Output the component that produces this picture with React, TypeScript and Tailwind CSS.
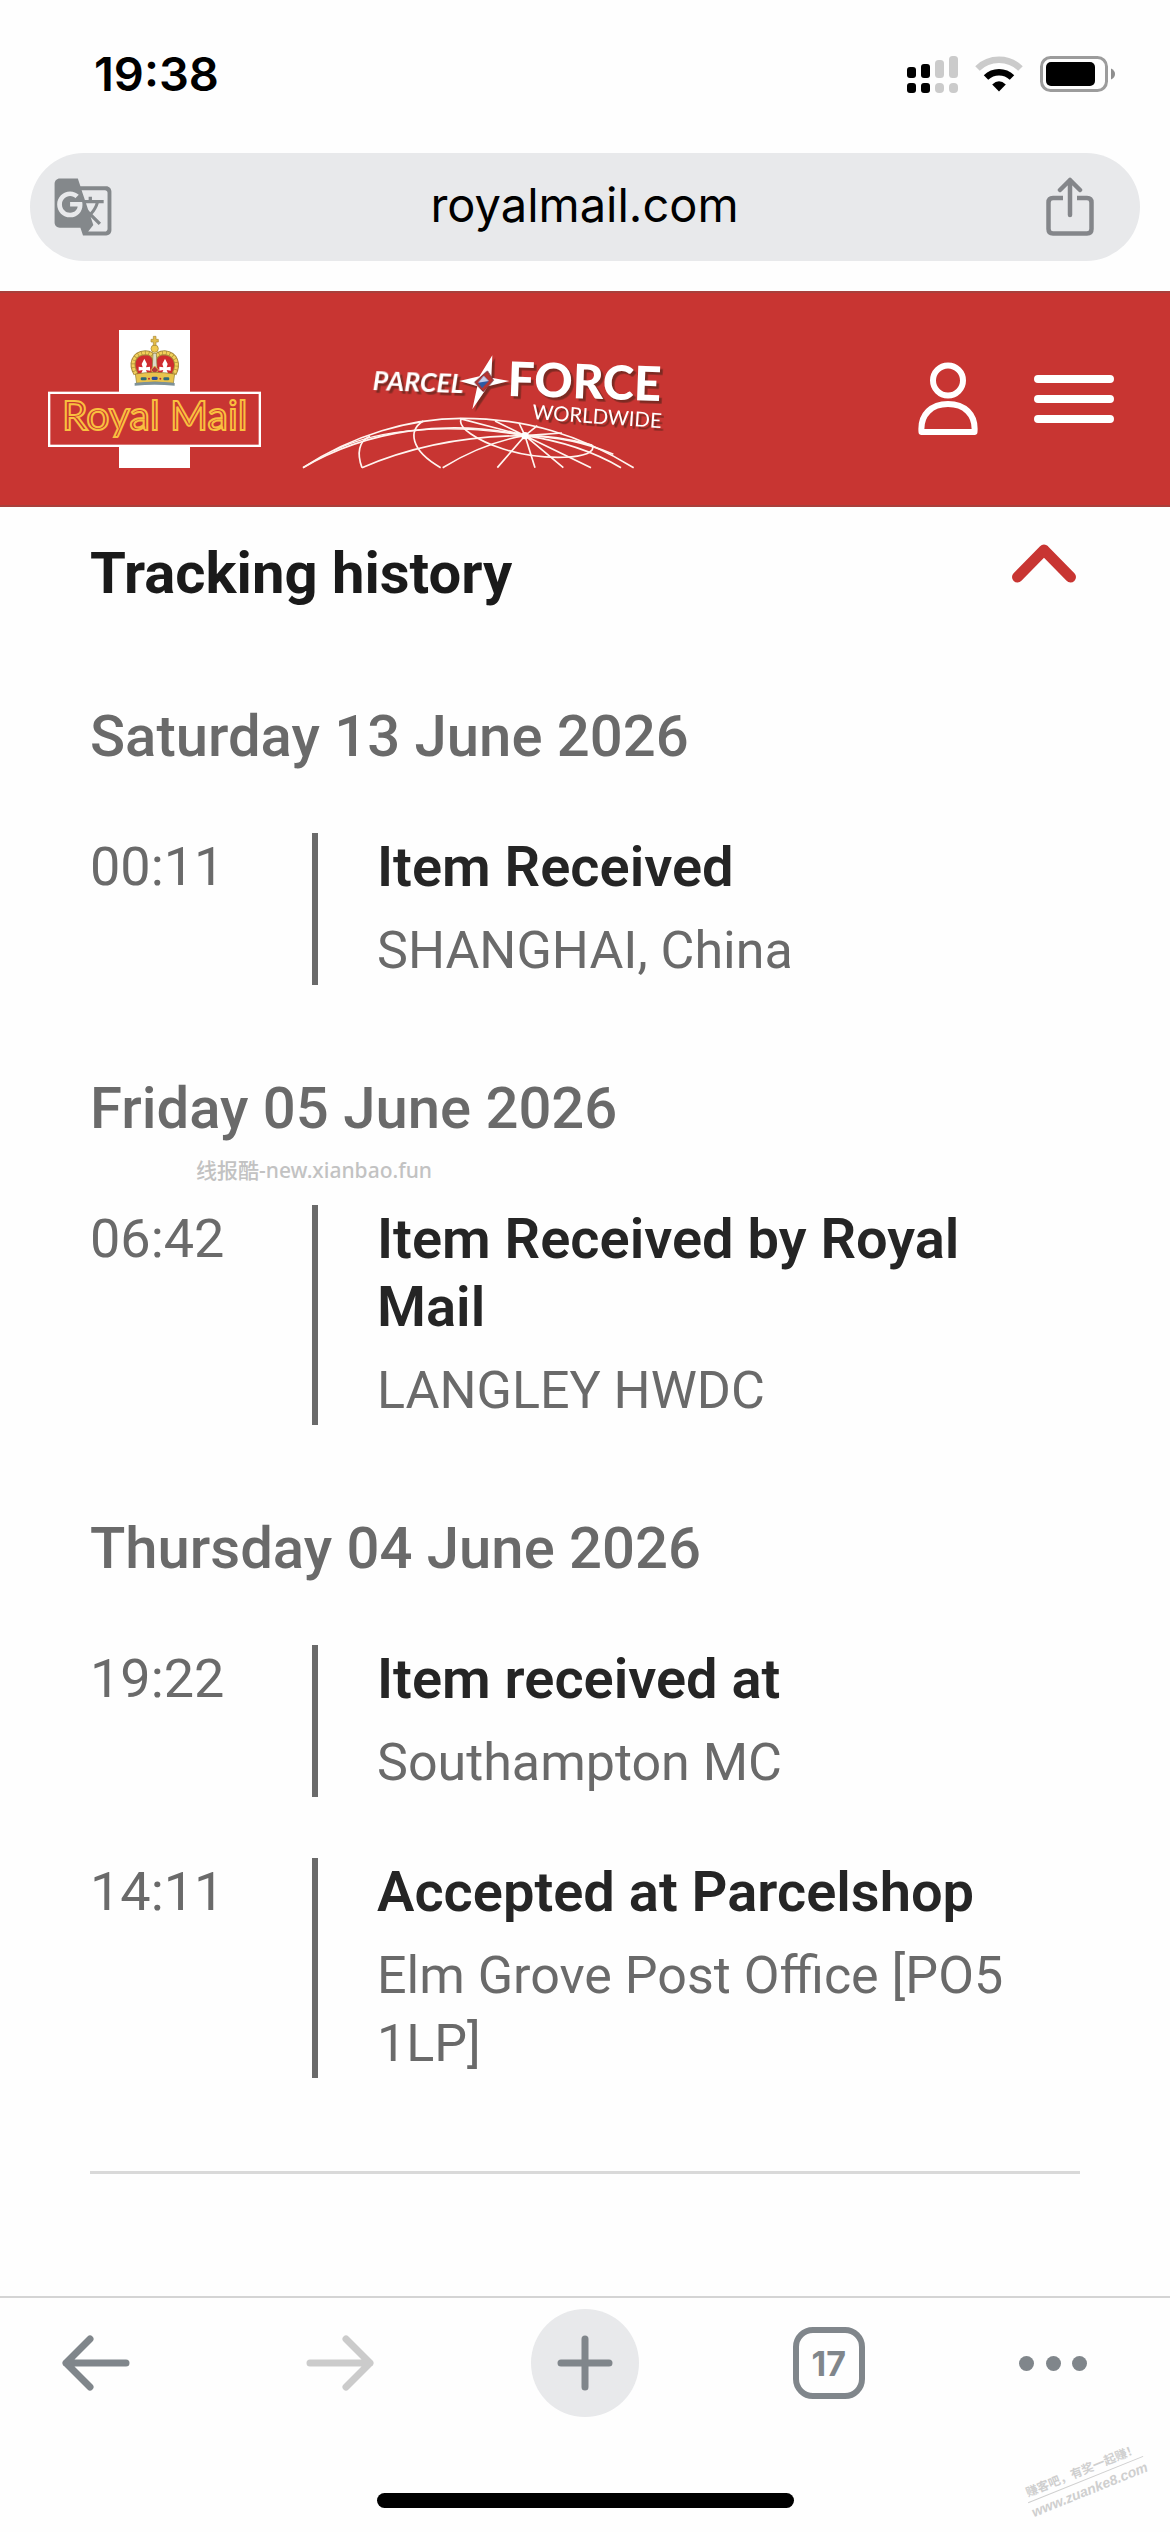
import { MdGTranslate } from "react-icons/md";

type TrackingEvent = {
  time: string;
  title: string;
  location: string;
};

type TrackingDay = {
  date: string;
  events: TrackingEvent[];
};

const days: TrackingDay[] = [
  {
    date: "Saturday 13 June 2026",
    events: [{ time: "00:11", title: "Item Received", location: "SHANGHAI, China" }],
  },
  {
    date: "Friday 05 June 2026",
    events: [
      { time: "06:42", title: "Item Received by Royal Mail", location: "LANGLEY HWDC" },
    ],
  },
  {
    date: "Thursday 04 June 2026",
    events: [
      { time: "19:22", title: "Item received at", location: "Southampton MC" },
      {
        time: "14:11",
        title: "Accepted at Parcelshop",
        location: "Elm Grove Post Office [PO5 1LP]",
      },
    ],
  },
];

function SignalIcon() {
  return (
    <svg width="51" height="37" viewBox="0 0 51 37" aria-hidden="true">
      <g fill="#000">
        <rect x="0" y="11" width="9" height="11" rx="3" />
        <rect x="14" y="8" width="9" height="14" rx="3" />
        <rect x="0" y="27" width="9" height="10" rx="3" />
        <rect x="14" y="27" width="9" height="10" rx="3" />
      </g>
      <g fill="#cbcbcb">
        <rect x="28" y="4" width="9" height="18" rx="3.5" />
        <rect x="42" y="0" width="9" height="22" rx="3.5" />
        <rect x="28" y="27" width="9" height="10" rx="4" />
        <rect x="42" y="27" width="9" height="10" rx="4" />
      </g>
    </svg>
  );
}

function WifiIcon() {
  return (
    <svg width="48" height="36" viewBox="0 0 48 36" fill="none" aria-hidden="true">
      <path d="M2.5 12.5A31 31 0 0 1 45.5 12.5" stroke="#cbcbcb" strokeWidth="6.5" />
      <path d="M11 21.5A19 19 0 0 1 37 21.5" stroke="#000" strokeWidth="6.5" />
      <path d="M24 35.5L17.2 28.5Q24 22 30.8 28.5Z" fill="#000" />
    </svg>
  );
}

function BatteryIcon() {
  return (
    <svg width="76" height="36" viewBox="0 0 76 36" aria-hidden="true">
      <rect x="1.5" y="1.5" width="65" height="33" rx="9" fill="none" stroke="#9c9c9c" strokeWidth="3" />
      <rect x="6" y="6" width="49" height="24" rx="5" fill="#000" />
      <path d="M71 12.5Q75 14.5 75 18T71 23.5Z" fill="#8e8e8e" />
    </svg>
  );
}

function StatusBar() {
  return (
    <div className="flex h-[148px] items-center justify-between pr-[54px] pl-[94px]">
      <span className="font-[Inter,sans-serif] text-[47px] font-semibold text-black">19:38</span>
      <div className="flex items-center gap-[17px]">
        <SignalIcon />
        <WifiIcon />
        <BatteryIcon />
      </div>
    </div>
  );
}

function AddressBar() {
  return (
    <div className="px-[30px] pt-[5px] pb-[30px]">
      <div className="flex h-[108px] items-center justify-between rounded-full bg-[#e8e9eb] pr-[45px] pl-[22px]">
        <button type="button" aria-label="Translate page">
          <MdGTranslate className="size-[62px] text-[#84888b]" />
        </button>
        <a href="#" className="pb-1 pl-[10px] font-[Inter,sans-serif] text-[47px] text-black">
          royalmail.com
        </a>
        <button type="button" aria-label="Share">
          <svg width="50" height="60" viewBox="0 0 50 60" fill="none" stroke="#84868a" strokeWidth="4.5" strokeLinecap="round">
            <path strokeLinecap="butt" d="M18 21H8Q3.5 21 3.5 25.500V52Q3.500 56.500 8 56.500H42Q46.500 56.500 46.500 52V25.500Q46.500 21 42 21H32" />
            <path d="M25 38V3M15 13L25 3L35 13" strokeLinejoin="round" />
          </svg>
        </button>
      </div>
    </div>
  );
}

function RoyalMailLogo() {
  return (
    <svg width="213" height="138" viewBox="144 120 639 414" role="img" aria-label="Royal Mail">
      <rect x="357" y="120" width="213" height="414" fill="#fff" />
      <rect x="147.500" y="308.500" width="632" height="159" fill="#c83532" stroke="#fff" strokeWidth="7" />

      {/* Crown */}
      <path d="M408 256C388 226 396 196 430 190C448 188 456 192 464 200C472 192 482 188 500 190C532 198 540 226 522 256Z" fill="#cf2b2f" />
      <path d="M408 252C390 222 400 190 436 188C450 188 460 196 464 206C468 196 478 188 494 188C528 192 538 222 522 252" fill="none" stroke="#a98a3a" strokeWidth="15" />
      <path d="M408 252C390 222 400 190 436 188C450 188 460 196 464 206C468 196 478 188 494 188C528 192 538 222 522 252" fill="none" stroke="#f2cf5a" strokeWidth="9" strokeDasharray="9 2" />
      <path d="M459 190H469L472 250H456Z" fill="#dcdcc8" stroke="#8c7a3a" strokeWidth="2" />
      <circle cx="464" cy="176" r="11" fill="#f0c94f" stroke="#9c7c2c" strokeWidth="2" />
      <path d="M460 166V156H453V148H460V139H468V148H475V156H468V166Z" fill="#e4bd48" stroke="#a98a3a" strokeWidth="2" />
      <g fill="#fff">
        <path d="M433 206L441 222L438 232L450 230V242L438 240L442 250H424L428 240L416 242V230L428 232L425 222Z" />
        <path d="M495 206L503 222L500 232L512 230V242L500 240L504 250H486L490 240L478 242V230L490 232L487 222Z" />
      </g>
      <path d="M452 240L464 228L476 240L464 252Z" fill="#b3383a" stroke="#e2b94c" strokeWidth="3" />
      <path d="M406 252Q464 242 524 252L520 280Q464 272 410 280Z" fill="#e9c34d" stroke="#8a7a34" strokeWidth="2" />
      <g fill="#2f6a78">
        <rect x="422" y="262" width="18" height="9" rx="4" />
        <rect x="490" y="262" width="18" height="9" rx="4" />
      </g>
      <rect x="455" y="260" width="18" height="10" rx="4" fill="#274f9a" />
      <circle cx="447" cy="266" r="3" fill="#b6282c" />
      <circle cx="481" cy="266" r="3" fill="#b6282c" />
      <path d="M404 279Q464 271 524 279V287Q464 281 404 287Z" fill="#7d9198" />

      <text
        x="464"
        y="420"
        textAnchor="middle"
        fill="#c83532"
        stroke="#f9bf3f"
        strokeWidth="6"
        className="font-[Lato,sans-serif] text-[123px]"
      >
        Royal Mail
      </text>
    </svg>
  );
}

function ParcelforceLogo() {
  return (
    <svg width="364" height="141" viewBox="60 116 1092 423" role="img" aria-label="Parcelforce Worldwide">
      {/* Globe */}
      <g fill="none" stroke="#fff5f0" strokeWidth="5">
        <path d="M69 532C220 434 390 384 545 384C740 384 900 434 1061 532" />
        <path d="M69 532C260 420 500 384 735 436" />
        <path d="M160 482C300 410 520 400 735 436" strokeWidth="4" />
        <path d="M246 532C400 466 560 436 735 436" />
        <path d="M488 532C570 482 650 450 735 436" />
        <path d="M652 532L735 436L765 532" />
        <path d="M735 436L850 532M735 436L933 532M735 436Q900 460 1023 532" />
        <path d="M735 436Q830 436 936 464M735 436Q880 440 1000 492" />
        <path d="M735 436L645 392M735 436L540 385M735 436L717 398M735 436L772 406M735 436L846 428" />
        <path d="M246 532C230 490 236 452 270 438" />
        <path d="M482 532C390 480 384 420 430 392" />
        <path d="M544 385C530 410 590 450 670 476C780 512 960 510 936 464" />
      </g>
      <circle cx="735" cy="436" r="11" fill="#fff" />

      <g fill="#fff" className="font-[Lato,sans-serif] drop-shadow-[8px_8px_1px_#7c2a22]">
        <text x="277" y="300" transform="rotate(2 277 300)" className="text-[80px] font-bold italic">
          PARCEL
        </text>
        <path d="M637 195L634 262L688 272L624 288L577 357L592 288L538 272L598 258Z" />
        <text x="682" y="316" transform="rotate(2 682 316)" className="text-[142px] font-black">
          FORCE
        </text>
        <text x="756" y="386" transform="rotate(4 756 386)" className="text-[61px]">
          WORLDWIDE
        </text>
      </g>
      <path d="M622 242L640 270L610 304L584 276Z" fill="#b8342f" stroke="#6f2630" strokeWidth="3" />
      <path d="M611 256L626 272L606 294L594 277Z" fill="#2d5aa4" />
      <path d="M611 256L626 272L594 277Z" fill="#c4cdea" />
    </svg>
  );
}

function SiteHeader() {
  return (
    <header className="flex h-[216px] items-center border-y-2 border-[#a8403c] bg-[#c83532] pr-[56px] pl-[48px]">
      <a href="#">
        <RoyalMailLogo />
      </a>
      <a href="#" className="ml-[39px]">
        <ParcelforceLogo />
      </a>
      <div className="ml-auto flex items-center gap-[56px]">
        <button type="button" aria-label="Account">
          <svg width="60" height="74" viewBox="0 0 60 74" fill="none" stroke="#fff" strokeWidth="6" strokeLinejoin="round">
            <circle cx="30" cy="18.500" r="15" />
            <path d="M3.500 70C2 52 14 42 30 42S58 52 56.500 70Z" />
          </svg>
        </button>
        <button type="button" aria-label="Menu">
          <svg width="80" height="48" viewBox="0 0 80 48" stroke="#fff" strokeWidth="8" strokeLinecap="round">
            <path d="M4 4H76M4 24H76M4 44H76" />
          </svg>
        </button>
      </div>
    </header>
  );
}

function EventRow({ time, title, location }: TrackingEvent) {
  return (
    <li className="flex leading-[68px]">
      <time className="w-[222px] shrink-0 text-[54px] text-[#6a6a6a]">{time}</time>
      <div className="flex-1 border-l-[6px] border-[#6a6a6a] pr-[40px] pl-[59px]">
        <h4 className="text-[56px] font-semibold text-[#252525]">{title}</h4>
        <p className="mt-4 text-[52px] text-[#6a6a6a]">{location}</p>
      </div>
    </li>
  );
}

function TrackingHistory() {
  return (
    <main className="px-[90px] pt-[31px] font-[Roboto,sans-serif]">
      <section className="border-b-[3px] border-[#d9d9d9] pb-[93px]">
        <div className="flex items-start justify-between">
          <h2 className="text-[58px] leading-[70px] font-bold text-[#1a1a1a]">Tracking history</h2>
          <button type="button" aria-label="Collapse tracking history" className="mt-[6px] mr-1">
            <svg width="64" height="39" viewBox="0 0 64 39" fill="none" stroke="#c83532" strokeWidth="11" strokeLinecap="round" strokeLinejoin="round">
              <path d="M5.500 33L32 6L58.500 33" />
            </svg>
          </button>
        </div>

        <div className="mt-[94px] flex flex-col gap-[89px]">
          {days.map((day) => (
            <div key={day.date}>
              <h3 className="text-[58px] leading-[68px] font-medium text-[#6a6a6a]">{day.date}</h3>
              <ul className="mt-[63px] flex flex-col gap-[61px]">
                {day.events.map((event) => (
                  <EventRow key={event.time} {...event} />
                ))}
              </ul>
            </div>
          ))}
        </div>
      </section>
    </main>
  );
}

function BottomToolbar() {
  return (
    <nav className="mt-auto border-t-2 border-[#d4d4d4]">
      <div className="flex items-center justify-between pt-[11px] pr-[83px] pl-[42px] text-[#80868b]">
        <button type="button" aria-label="Back" className="flex size-[108px] items-center justify-center">
          <svg width="68" height="56" viewBox="0 0 68 56" fill="none" stroke="currentColor" strokeWidth="7" strokeLinecap="round" strokeLinejoin="round">
            <path d="M64 28H4M28 4L4 28L28 52" />
          </svg>
        </button>
        <button type="button" aria-label="Forward" disabled className="flex size-[108px] items-center justify-center text-[#cbcbcb]">
          <svg width="68" height="56" viewBox="0 0 68 56" fill="none" stroke="currentColor" strokeWidth="7" strokeLinecap="round" strokeLinejoin="round">
            <path d="M4 28H64M40 4L64 28L40 52" />
          </svg>
        </button>
        <button type="button" aria-label="New tab" className="flex size-[108px] items-center justify-center rounded-full bg-[#e8e9eb]">
          <svg width="56" height="56" viewBox="0 0 56 56" stroke="currentColor" strokeWidth="7" strokeLinecap="round">
            <path d="M28 4V52M4 28H52" />
          </svg>
        </button>
        <button type="button" aria-label="Open tabs" className="flex size-[108px] items-center justify-center">
          <span className="flex size-[72px] items-center justify-center rounded-[20px] border-[6px] border-current font-[Inter,sans-serif] text-[34px] font-bold">
            17
          </span>
        </button>
        <button type="button" aria-label="More" className="flex w-[68px] items-center justify-between">
          <span className="size-[15px] rounded-full bg-current" />
          <span className="size-[15px] rounded-full bg-current" />
          <span className="size-[15px] rounded-full bg-current" />
        </button>
      </div>
      <div className="mx-auto mt-[76px] mb-[24px] h-[15px] w-[417px] rounded-full bg-black" />
    </nav>
  );
}

export default function App() {
  return (
    <div className="relative flex min-h-screen flex-col overflow-hidden bg-[#fefefe]">
      <StatusBar />
      <AddressBar />
      <SiteHeader />
      <TrackingHistory />
      <BottomToolbar />

      {/* Watermarks */}
      <p className="absolute top-[1156px] left-[196px] font-['Noto_Sans','Noto_Sans_CJK_SC',sans-serif] text-[21px] leading-[28px] font-medium text-[#c2c2c2]">
        线报酷-new.xianbao.fun
      </p>
      <div className="absolute right-[22px] bottom-[32px] w-[124px] -rotate-[22deg] text-center font-['Liberation_Sans','Noto_Sans_CJK_SC',sans-serif] font-bold whitespace-nowrap text-[#cfcfcf]">
        <p className="border-b border-[#cfcfcf] text-[12px] leading-[18px]">赚客吧，有奖一起赚！</p>
        <p className="text-[14px] leading-[20px] italic">www.zuanke8.com</p>
      </div>
    </div>
  );
}
